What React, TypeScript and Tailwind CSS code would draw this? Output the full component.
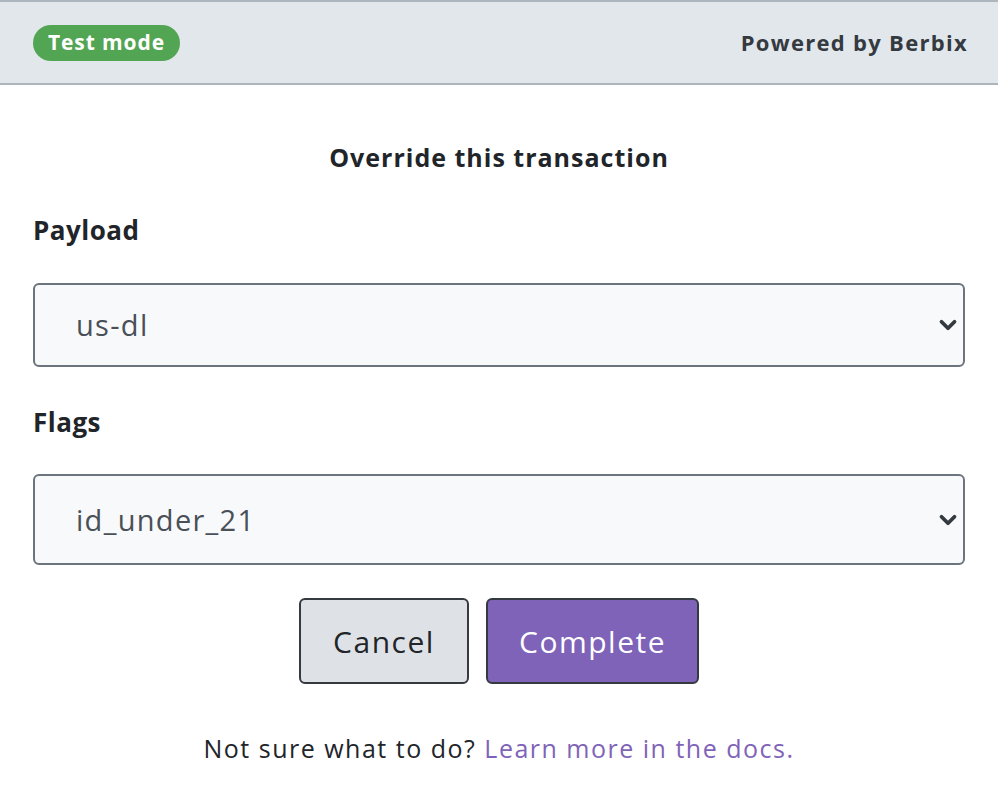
import { ChevronDown } from 'lucide-react'

const font = { fontFamily: '"Open Sans", "Noto Sans", sans-serif' }

function Select({ value, height }: { value: string; height: string }) {
  return (
    <div
      className={`flex items-center justify-between ${height} mx-[33px] rounded-md border-2 border-[#6c757d] bg-[#f8f9fa] pl-[41px] pr-[2px]`}
    >
      <span className="text-[29px] tracking-[1.3px] text-[#495057]">{value}</span>
      <ChevronDown className="w-[26px] h-[26px] text-[#343a40]" strokeWidth={3.5} />
    </div>
  )
}

export default function App() {
  return (
    <div className="w-[998px] h-[796px] bg-white text-[#212529]" style={font}>
      {/* Header */}
      <div className="h-[85px] border-t-2 border-b-2 border-[#adb5bd] bg-[#e2e7ec] flex items-center justify-between pl-[33px] pr-[30px]">
        <span className="h-[36px] px-[15px] rounded-full bg-[#52a552] text-white text-[21px] tracking-[0.9px] font-bold flex items-center">
          Test mode
        </span>
        <span className="text-[22px] tracking-[1.3px] font-bold text-[#343a40]">Powered by Berbix</span>
      </div>

      <h2 className="mt-[56px] text-center text-[25px] tracking-[1px] font-bold leading-[32px]">
        Override this transaction
      </h2>

      <div className="mt-[41px] pl-[33px] text-[26px] tracking-[0.5px] font-bold leading-[32px]">Payload</div>
      <div className="mt-[37px]">
        <Select value="us-dl" height="h-[84px]" />
      </div>

      <div className="mt-[39px] pl-[33px] text-[26px] tracking-[0.5px] font-bold leading-[32px]">Flags</div>
      <div className="mt-[36px]">
        <Select value="id_under_21" height="h-[91px]" />
      </div>

      <div className="mt-[33px] flex justify-center gap-[17px]">
        <button className="w-[170px] h-[86px] rounded-md border-2 border-[#343a40] bg-[#dee2e6] text-[30px] tracking-[1.5px] text-[#212529]">
          Cancel
        </button>
        <button className="w-[213px] h-[86px] rounded-md border-2 border-[#343a40] bg-[#7f63b8] text-[30px] tracking-[1.5px] text-white">
          Complete
        </button>
      </div>

      <p className="mt-[48px] text-center text-[25px] tracking-[1.5px] leading-[32px]">
        Not sure what to do? <a className="text-[#7f63b8]">Learn more in the docs.</a>
      </p>
    </div>
  )
}
